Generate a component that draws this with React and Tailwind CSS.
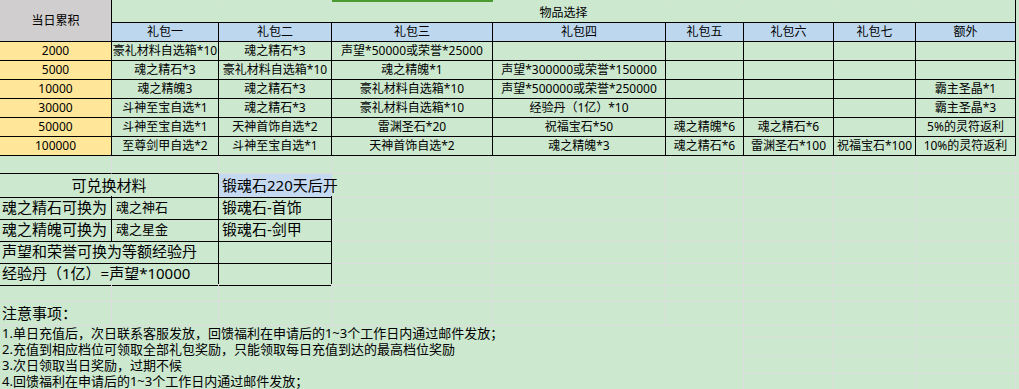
const COLS = "grid grid-cols-[112px_107px_113px_161px_173px_78px_90px_82px_100px_3px]";
const GRID = "border-[#dadcdd]";

const PACKS = ["礼包一", "礼包二", "礼包三", "礼包四", "礼包五", "礼包六", "礼包七", "额外"];

const ROWS = [
  ["2000", "豪礼材料自选箱*10", "魂之精石*3", "声望*50000或荣誉*25000", "", "", "", "", ""],
  ["5000", "魂之精石*3", "豪礼材料自选箱*10", "魂之精魄*1", "声望*300000或荣誉*150000", "", "", "", ""],
  ["10000", "魂之精魄3", "魂之精石*3", "豪礼材料自选箱*10", "声望*500000或荣誉*250000", "", "", "", "霸主圣晶*1"],
  ["30000", "斗神至宝自选*1", "魂之精石*3", "豪礼材料自选箱*10", "经验丹（1亿）*10", "", "", "", "霸主圣晶*3"],
  ["50000", "斗神至宝自选*1", "天神首饰自选*2", "雷渊圣石*20", "祝福宝石*50", "魂之精魄*6", "魂之精石*6", "", "5%的灵符返利"],
  ["100000", "至尊剑甲自选*2", "斗神至宝自选*1", "天神首饰自选*2", "魂之精魄*3", "魂之精石*6", "雷渊圣石*100", "祝福宝石*100", "10%的灵符返利"],
];

const NOTES = [
  "1.单日充值后，次日联系客服发放，回馈福利在申请后的1~3个工作日内通过邮件发放；",
  "2.充值到相应档位可领取全部礼包奖励，只能领取每日充值到达的最高档位奖励",
  "3.次日领取当日奖励，过期不候",
  "4.回馈福利在申请后的1~3个工作日内通过邮件发放；",
];

// empty spreadsheet cells with light gridlines
function Blank({ n, cls = "" }) {
  return Array.from({ length: n }).map((_, i) => (
    <div key={i} className={`border-r border-b ${GRID} ${cls}`} />
  ));
}

function DataRow({ row }) {
  return (
    <div className={`${COLS} h-[19px] text-[12px]`}>
      <div className="bg-[#ffe699] border-r border-b border-black flex items-center justify-center">{row[0]}</div>
      {row.slice(1).map((c, i) => (
        <div key={i} className="border-r border-b border-black flex items-center justify-center whitespace-nowrap overflow-hidden">
          {c}
        </div>
      ))}
      <div className={`border-b ${GRID}`} />
    </div>
  );
}

function GapRow({ topTable }) {
  return (
    <div className={`${COLS} h-[18px]`}>
      <div className={`border-r ${GRID} border-b ${topTable ? "border-b-black" : ""}`} />
      <div className={`border-r ${GRID} border-b ${topTable ? "border-b-black" : ""}`} />
      <Blank n={7} />
      <div className={`border-b ${GRID}`} />
    </div>
  );
}

export default function App() {
  return (
    <div className="w-[1019px] h-[389px] overflow-hidden bg-[#cce8cf] text-black font-['Noto_Sans','Noto_Sans_CJK_SC',sans-serif]">
      {/* header */}
      <div className={`${COLS} grid-rows-[2px_21px_19px] text-[12px]`}>
        <div className="row-span-3 bg-[#d0cece] border-r border-b border-black flex items-center justify-center">当日累积</div>
        <div className={`border-r ${GRID}`} />
        <div className={`border-r ${GRID}`} />
        <div className="bg-[#4b9b30]" />
        <div className={`border-r ${GRID}`} />
        <div className={`border-r ${GRID}`} />
        <div className={`border-r ${GRID}`} />
        <div className={`border-r ${GRID}`} />
        <div className="border-r border-black" />
        <div />
        <div className="col-span-8 border-r border-b border-black flex items-center justify-center pt-[2px]">物品选择</div>
        <div className={`border-b ${GRID}`} />
        {PACKS.map((p) => (
          <div key={p} className="bg-[#bdd7ee] border-r border-b border-black flex items-center justify-center">{p}</div>
        ))}
        <div className={`border-b ${GRID}`} />
      </div>

      {ROWS.map((r) => <DataRow key={r[0]} row={r} />)}

      <GapRow topTable />

      {/* exchange table */}
      <div className={`${COLS} h-[22px] text-[15px]`}>
        <div className="col-span-2 border-r border-b border-black flex items-center justify-center">可兑换材料</div>
        <div className="bg-[#c5d9f1] border-b border-black flex items-center pl-[3px] whitespace-nowrap">锻魂石220天后开</div>
        <Blank n={6} />
        <div className={`border-b ${GRID}`} />
      </div>
      <div className={`${COLS} h-[22px] text-[15px]`}>
        <div className="border-r border-b border-black flex items-center pl-[2px] whitespace-nowrap overflow-hidden">魂之精石可换为</div>
        <div className="border-r border-b border-black flex items-center pl-[4px] text-[13px]">魂之神石</div>
        <div className="border-r border-b border-black flex items-center pl-[3px]">锻魂石-首饰</div>
        <Blank n={6} />
        <div className={`border-b ${GRID}`} />
      </div>
      <div className={`${COLS} h-[22px] text-[15px]`}>
        <div className="border-r border-b border-black flex items-center pl-[2px] whitespace-nowrap overflow-hidden">魂之精魄可换为</div>
        <div className="border-r border-b border-black flex items-center pl-[4px] text-[13px]">魂之星金</div>
        <div className="border-r border-b border-black flex items-center pl-[3px]">锻魂石-剑甲</div>
        <Blank n={6} />
        <div className={`border-b ${GRID}`} />
      </div>
      <div className={`${COLS} h-[22px] text-[15px]`}>
        <div className="col-span-2 border-r border-b border-black flex items-center pl-[2px] whitespace-nowrap">声望和荣誉可换为等额经验丹</div>
        <div className="border-r border-b border-black" />
        <Blank n={6} />
        <div className={`border-b ${GRID}`} />
      </div>
      <div className={`${COLS} h-[22px] text-[15px]`}>
        <div className="col-span-2 border-r border-b border-black flex items-center pl-[2px] whitespace-nowrap">经验丹（1亿）=声望*10000</div>
        <div className="border-r border-b border-black" />
        <Blank n={6} />
        <div className={`border-b ${GRID}`} />
      </div>

      <GapRow />

      {/* notes */}
      <div className={`${COLS} h-[18px]`}>
        <div className={`border-r border-b ${GRID} flex items-center pl-[2px] text-[15px] whitespace-nowrap`}>注意事项：</div>
        <Blank n={8} />
        <div className={`border-b ${GRID}`} />
      </div>
      <div className={`${COLS} grid-rows-[18px_18px_18px_18px]`}>
        <div className={`col-span-6 row-span-4 border-r ${GRID} pl-[2px] pt-[5px] text-[13px] leading-[16px] whitespace-nowrap`}>
          {NOTES.map((n) => <div key={n}>{n}</div>)}
        </div>
        {[0, 1, 2, 3].map((i) => [
          <div key={`a${i}`} className={`border-r border-b ${GRID}`} />,
          <div key={`b${i}`} className={`border-r border-b ${GRID}`} />,
          <div key={`c${i}`} className={`border-r border-b ${GRID}`} />,
          <div key={`d${i}`} className={`border-b ${GRID}`} />,
        ])}
      </div>
    </div>
  );
}
